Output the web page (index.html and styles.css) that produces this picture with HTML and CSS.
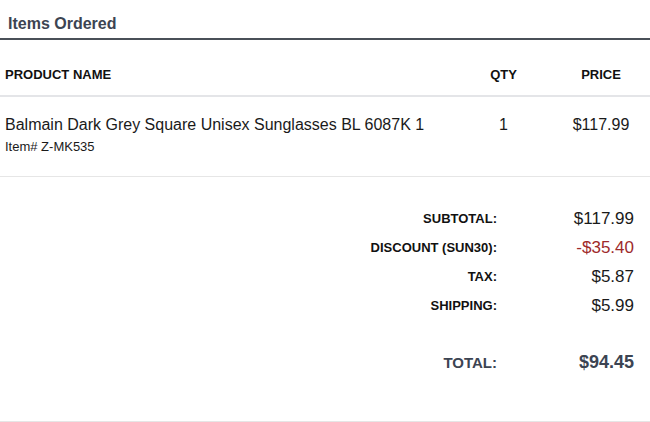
FILE: index.html
```html
<!DOCTYPE html>
<html>
<head>
<meta charset="utf-8">
<link rel="stylesheet" href="styles.css">
</head>
<body>
<section class="order">
  <h2 class="title">Items Ordered</h2>
  <div class="row head">
    <div class="c-name">PRODUCT NAME</div>
    <div class="c-qty">QTY</div>
    <div class="c-price">PRICE</div>
  </div>
  <div class="row item">
    <div class="c-name">
      <div class="pname">Balmain Dark Grey Square Unisex Sunglasses BL 6087K 1</div>
      <div class="sku">Item# Z-MK535</div>
    </div>
    <div class="c-qty">1</div>
    <div class="c-price">$117.99</div>
  </div>
  <div class="summary">
    <div class="lbl">SUBTOTAL:</div><div class="val">$117.99</div>
    <div class="lbl">DISCOUNT (SUN30):</div><div class="val neg">-$35.40</div>
    <div class="lbl">TAX:</div><div class="val">$5.87</div>
    <div class="lbl">SHIPPING:</div><div class="val">$5.99</div>
    <div class="lbl total">TOTAL:</div><div class="val total">$94.45</div>
  </div>
</section>
</body>
</html>
```
FILE: styles.css
```css
html, body {
  margin: 0;
  padding: 0;
  background: #ffffff;
}
body {
  font-family: "Liberation Sans", Arial, sans-serif;
  color: #1a1a1a;
}
.order {
  width: 650px;
}
.title {
  margin: 0;
  padding: 15px 8px 5px;
  font-size: 16px;
  line-height: 18px;
  font-weight: bold;
  color: #3c4452;
  border-bottom: 2px solid #4a5058;
}
.row {
  display: grid;
  grid-template-columns: 1fr 97px 98px;
}
.c-name {
  padding-left: 5px;
}
.c-qty, .c-price {
  text-align: center;
}
.head {
  padding: 27px 0 12px;
  font-size: 13px;
  line-height: 16px;
  font-weight: bold;
  color: #111;
  border-bottom: 2px solid #e4e5e8;
}
.item {
  padding: 19px 0 21px;
  border-bottom: 1px solid #e6e6e6;
  font-size: 16px;
  line-height: 18px;
  color: #1a1a1a;
}
.pname {
  font-size: 16px;
  line-height: 18px;
}
.sku {
  margin-top: 5px;
  font-size: 13px;
  line-height: 16px;
}
.summary {
  display: grid;
  grid-template-columns: 1fr 137px;
  align-items: center;
  padding: 27px 0 44px;
  border-bottom: 2px solid #e6e6e6;
}
.lbl {
  text-align: right;
  padding-right: 16px;
  font-size: 13px;
  line-height: 29px;
  font-weight: bold;
  color: #111;
}
.val {
  text-align: right;
  padding-right: 16px;
  font-size: 17px;
  line-height: 29px;
  color: #1a1a1a;
}
.neg {
  color: #9e2a2b;
}
.lbl.total {
  margin-top: 28px;
  font-size: 15px;
  color: #3c4452;
}
.val.total {
  margin-top: 28px;
  font-size: 18px;
  font-weight: bold;
  color: #3c4452;
}
```
